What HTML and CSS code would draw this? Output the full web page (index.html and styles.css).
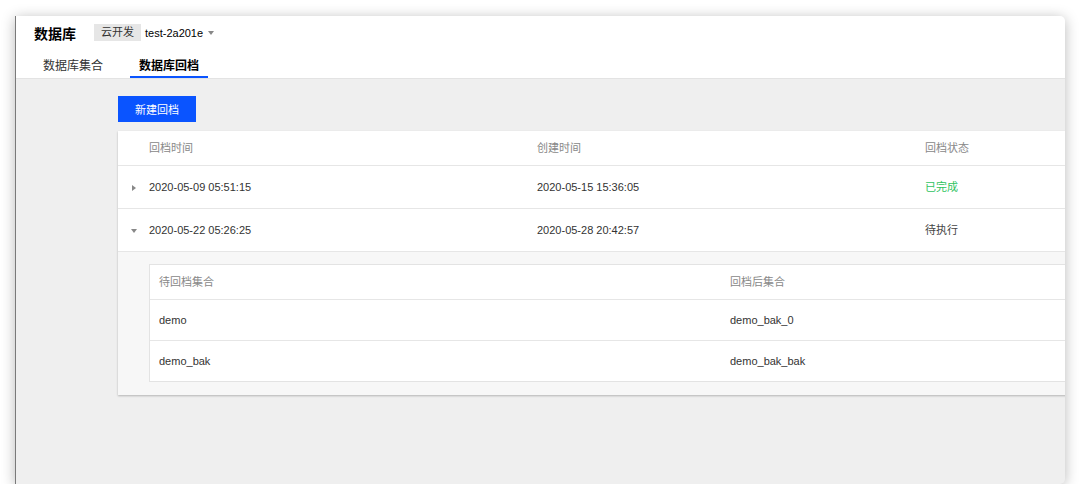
FILE: index.html
```html
<!DOCTYPE html>
<html lang="zh-CN">
<head>
    <meta charset="UTF-8">
    <title>数据库回档</title>
    <link rel="stylesheet" href="styles.css">
</head>
<body>
    <div class="window">
        <!-- 顶部标题和标签页 -->
        <div class="topbar">
            <div class="title-row">
                <span class="title">数据库</span>
                <span class="env-tag">云开发</span>
                <span class="env-name">test-2a201e</span>
                <span class="dropdown-caret"></span>
            </div>
            <div class="tabs">
                <span class="tab">数据库集合</span>
                <span class="tab active">数据库回档</span>
            </div>
        </div>

        <!-- 回档列表 -->
        <div class="content">
            <button class="btn-primary">新建回档</button>
            <div class="card">
                <table class="list">
                    <colgroup>
                        <col style="width:31px">
                        <col style="width:388px">
                        <col style="width:388px">
                        <col style="width:388px">
                    </colgroup>
                    <thead>
                        <tr>
                            <th></th>
                            <th>回档时间</th>
                            <th>创建时间</th>
                            <th>回档状态</th>
                        </tr>
                    </thead>
                    <tbody>
                        <tr>
                            <td class="toggle"><span class="caret-right"></span></td>
                            <td>2020-05-09 05:51:15</td>
                            <td>2020-05-15 15:36:05</td>
                            <td class="status-done">已完成</td>
                        </tr>
                        <tr>
                            <td class="toggle"><span class="caret-down"></span></td>
                            <td>2020-05-22 05:26:25</td>
                            <td>2020-05-28 20:42:57</td>
                            <td class="status-wait">待执行</td>
                        </tr>
                        <tr class="expand-row">
                            <td colspan="4">
                                <table class="sub-list">
                                    <thead>
                                        <tr>
                                            <th>待回档集合</th>
                                            <th>回档后集合</th>
                                        </tr>
                                    </thead>
                                    <tbody>
                                        <tr>
                                            <td>demo</td>
                                            <td>demo_bak_0</td>
                                        </tr>
                                        <tr>
                                            <td>demo_bak</td>
                                            <td>demo_bak_bak</td>
                                        </tr>
                                    </tbody>
                                </table>
                            </td>
                        </tr>
                    </tbody>
                </table>
            </div>
        </div>
    </div>
</body>
</html>
```

FILE: styles.css
```css
body {
    margin: 0;
    background: #fff;
    font-family: 'Liberation Sans', 'Noto Sans CJK SC', sans-serif;
    font-size: 11px;
    color: #333;
}

.window {
    margin: 16px 0 0 15px;
    width: 1049px;
    height: 468px;
    overflow: hidden;
    background: #efefef;
    border-left: 1px solid #7a7a7a;
    border-radius: 0 5px 5px 0;
    box-shadow: 0 2px 14px rgba(0,0,0,0.28);
}

.topbar {
    background: #fff;
    padding-left: 18px;
    border-bottom: 1px solid #e3e3e3;
}

.title-row {
    display: flex;
    align-items: center;
    height: 31px;
    padding-top: 1px;
}

.title {
    font-size: 14px;
    font-weight: bold;
    color: #000;
    margin-right: 18px;
}

.env-tag {
    background: #e6e6e6;
    padding: 0 7px;
    line-height: 17px;
    margin-right: 4px;
}

.env-name { color: #000; }

.dropdown-caret {
    margin-left: 5px;
    border-top: 4px solid #888;
    border-left: 3px solid transparent;
    border-right: 3px solid transparent;
}

.tabs {
    display: flex;
    gap: 18px;
}

.tab {
    font-size: 12px;
    padding: 8px 9px 0;
    line-height: 20px;
    border-bottom: 2px solid transparent;
    color: #333;
}

.tab.active {
    font-weight: bold;
    color: #000;
    border-bottom-color: #0a54ff;
}

.content {
    padding: 17px 0 0 102px;
}

.btn-primary {
    display: block;
    width: 78px;
    height: 26px;
    border: none;
    background: #0a54ff;
    color: #fff;
    font-family: inherit;
    font-size: 11px;
    padding: 0;
    margin-bottom: 9px;
}

.card {
    width: 1195px;
    background: #fff;
    box-shadow: 0 1px 2px rgba(0,0,0,0.25);
}

table {
    border-collapse: separate;
    border-spacing: 0;
    table-layout: fixed;
}

.list { width: 1195px; }

.list th, .list td {
    padding: 0;
    text-align: left;
    border-bottom: 1px solid #e6e6e6;
}

.list th {
    font-weight: normal;
    color: #888;
    line-height: 34px;
}

.list td { line-height: 42px; }

.list .toggle { text-align: center; }

.caret-right, .caret-down {
    display: inline-block;
    vertical-align: middle;
}

.caret-right {
    border-left: 4px solid #888;
    border-top: 3px solid transparent;
    border-bottom: 3px solid transparent;
}

.caret-down {
    border-top: 4px solid #888;
    border-left: 3px solid transparent;
    border-right: 3px solid transparent;
}

.status-done { color: #2fc35f; }
.status-wait { color: #444; }

.list .expand-row td {
    background: #f7f7f7;
    padding: 12px 20px 13px 31px;
    line-height: normal;
    border-bottom: none;
}

.sub-list {
    width: 1144px;
    background: #fff;
    border: 1px solid #e3e3e3;
}

.list .sub-list th, .list .sub-list td {
    padding-left: 9px;
    background: #fff;
    border-bottom: 1px solid #e6e6e6;
}

.list .sub-list th { line-height: 34px; }

.list .sub-list td {
    line-height: 40px;
    padding-top: 0;
    padding-bottom: 0;
}

.list .sub-list tr:last-child td { border-bottom: none; }
```
